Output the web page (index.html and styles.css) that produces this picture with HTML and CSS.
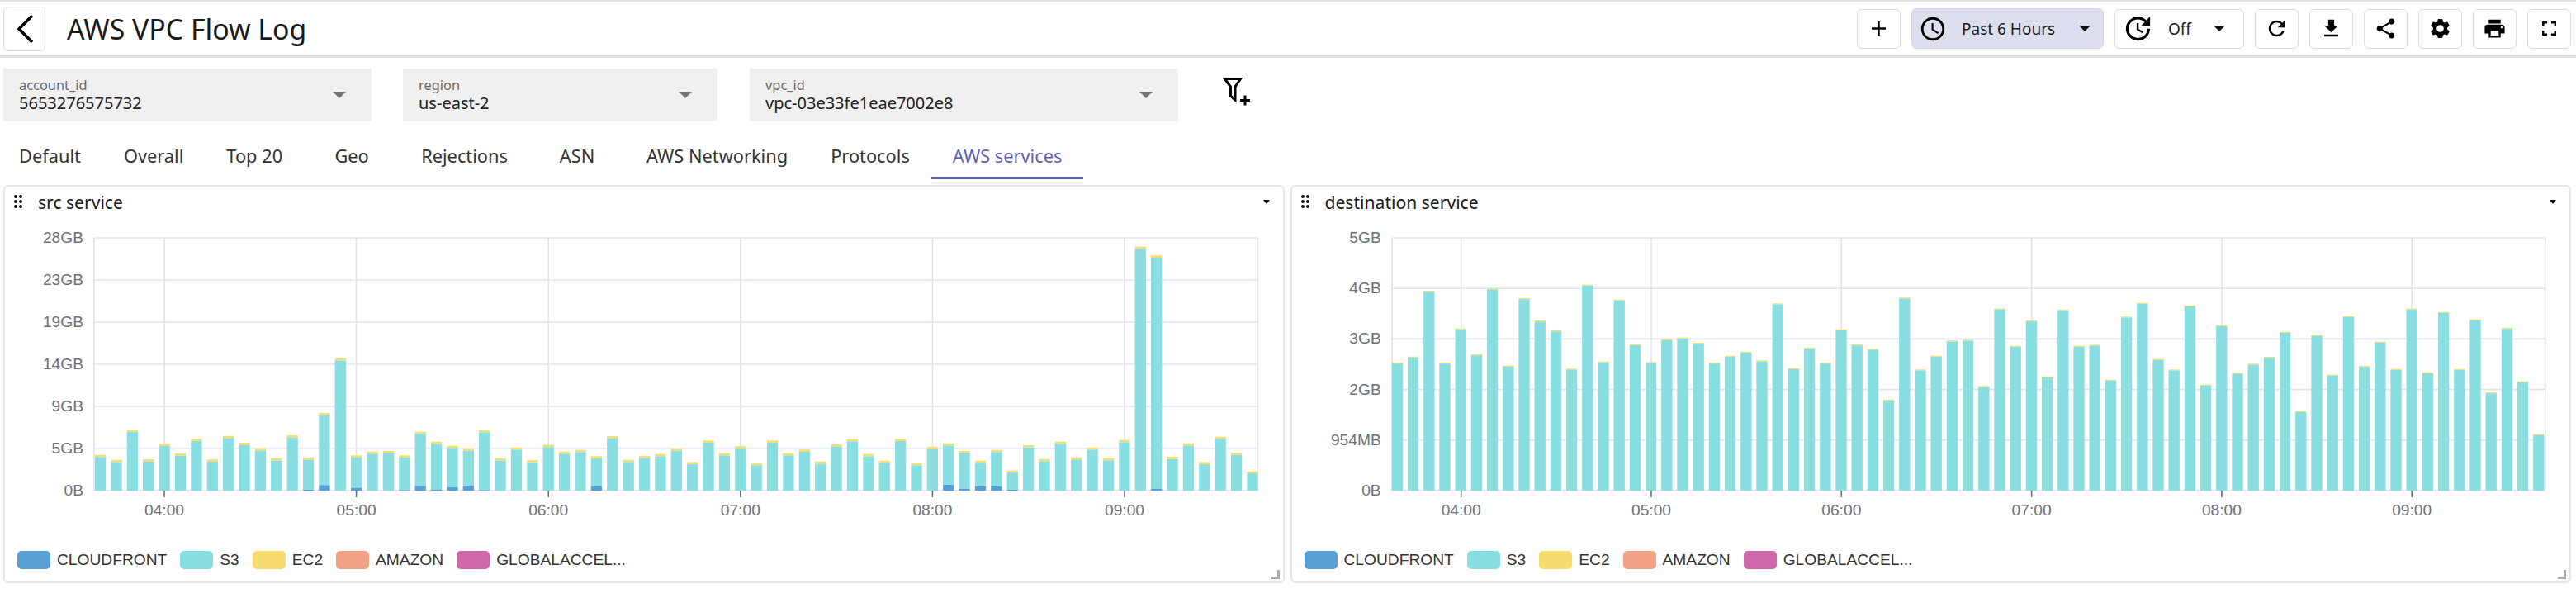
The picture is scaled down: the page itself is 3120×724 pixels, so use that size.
FILE: index.html
```html
<!DOCTYPE html>
<html lang="en">
<head>
  <meta charset="UTF-8" />
  <title>AWS VPC Flow Log</title>
  <link rel="stylesheet" href="styles.css">
</head>
<body>

  <header class="topbar">
    <button class="btn back-btn">
      <svg width="34" height="40" viewBox="0 0 34 40"><path d="M26 4 L10 20 L26 36" fill="none" stroke="#000" stroke-width="3.6"/></svg>
    </button>
    <h1 class="page-title">AWS VPC Flow Log</h1>

    <div class="toolbar">
      <button class="btn icon-btn">
        <svg class="icon" viewBox="0 0 24 24"><path d="M19 13h-6v6h-2v-6H5v-2h6V5h2v6h6v2z"/></svg>
      </button>
      <button class="btn range-btn">
        <svg class="icon-lg" viewBox="0 0 24 24"><path d="M11.99 2C6.47 2 2 6.48 2 12s4.47 10 9.99 10C17.52 22 22 17.52 22 12S17.52 2 11.99 2zM12 20c-4.42 0-8-3.58-8-8s3.58-8 8-8 8 3.58 8 8-3.58 8-8 8zm.5-13H11v6l5.25 3.15.75-1.23-4.5-2.67z"/></svg>
        <span class="btn-label">Past 6 Hours</span>
        <span class="caret"></span>
      </button>
      <button class="btn auto-btn">
        <svg class="icon-xl" viewBox="0 0 24 24"><path d="M21 10.12h-6.78l2.74-2.82c-2.73-2.7-7.15-2.8-9.88-.1-2.73 2.71-2.73 7.08 0 9.79s7.15 2.71 9.88 0C18.32 15.65 19 14.08 19 12.1h2c0 1.98-.88 4.55-2.64 6.29-3.51 3.48-9.21 3.48-12.72 0-3.5-3.47-3.53-9.11-.02-12.58s9.14-3.47 12.65 0L21 3v7.12zM12.5 8v4.25l3.5 2.08-.72 1.21L11 13V8h1.5z"/></svg>
        <span class="btn-label">Off</span>
        <span class="caret"></span>
      </button>
      <button class="btn icon-btn">
        <svg class="icon" viewBox="0 0 24 24"><path d="M17.65 6.35C16.2 4.9 14.21 4 12 4c-4.42 0-7.99 3.58-7.99 8s3.57 8 7.99 8c3.73 0 6.84-2.55 7.73-6h-2.08c-.82 2.33-3.04 4-5.65 4-3.31 0-6-2.69-6-6s2.69-6 6-6c1.66 0 3.14.69 4.22 1.78L13 11h7V4l-2.35 2.35z"/></svg>
      </button>
      <button class="btn icon-btn">
        <svg class="icon" viewBox="0 0 24 24"><path d="M19 9h-4V3H9v6H5l7 7 7-7zM5 18v2h14v-2H5z"/></svg>
      </button>
      <button class="btn icon-btn">
        <svg class="icon" viewBox="0 0 24 24"><path d="M18 16.08c-.76 0-1.44.3-1.96.77L8.91 12.7c.05-.23.09-.46.09-.7s-.04-.47-.09-.7l7.05-4.11c.54.5 1.25.81 2.04.81 1.66 0 3-1.34 3-3s-1.34-3-3-3-3 1.34-3 3c0 .24.04.47.09.7L8.04 9.81C7.5 9.31 6.79 9 6 9c-1.66 0-3 1.34-3 3s1.34 3 3 3c.79 0 1.5-.31 2.04-.81l7.12 4.16c-.05.21-.08.43-.08.65 0 1.61 1.31 2.92 2.92 2.92 1.61 0 2.92-1.31 2.92-2.92s-1.31-2.92-2.92-2.92z"/></svg>
      </button>
      <button class="btn icon-btn">
        <svg class="icon" viewBox="0 0 24 24"><path d="M19.14 12.94c.04-.3.06-.61.06-.94 0-.32-.02-.64-.07-.94l2.03-1.58c.18-.14.23-.41.12-.61l-1.92-3.32c-.12-.22-.37-.29-.59-.22l-2.39.96c-.5-.38-1.03-.7-1.62-.94l-.36-2.54c-.04-.24-.24-.41-.48-.41h-3.84c-.24 0-.43.17-.47.41l-.36 2.54c-.59.24-1.13.57-1.62.94l-2.39-.96c-.22-.08-.47 0-.59.22L2.74 8.87c-.12.21-.08.47.12.61l2.03 1.58c-.05.3-.09.63-.09.94s.02.64.07.94l-2.03 1.58c-.18.14-.23.41-.12.61l1.92 3.32c.12.22.37.29.59.22l2.39-.96c.5.38 1.03.7 1.62.94l.36 2.54c.05.24.24.41.48.41h3.84c.24 0 .44-.17.47-.41l.36-2.54c.59-.24 1.13-.56 1.62-.94l2.39.96c.22.08.47 0 .59-.22l1.92-3.32c.12-.22.07-.47-.12-.61l-2.01-1.58zM12 15.6c-1.98 0-3.6-1.62-3.6-3.6s1.62-3.6 3.6-3.6 3.6 1.62 3.6 3.6-1.62 3.6-3.6 3.6z"/></svg>
      </button>
      <button class="btn icon-btn">
        <svg class="icon" viewBox="0 0 24 24"><path d="M19 8H5c-1.66 0-3 1.34-3 3v6h4v4h12v-4h4v-6c0-1.66-1.34-3-3-3zm-3 11H8v-5h8v5zm3-7c-.55 0-1-.45-1-1s.45-1 1-1 1 .45 1 1-.45 1-1 1zm-1-9H6v4h12V3z"/></svg>
      </button>
      <button class="btn icon-btn">
        <svg class="icon" viewBox="0 0 24 24"><path d="M7 14H5v5h5v-2H7v-3zm-2-4h2V7h3V5H5v5zm12 7h-3v2h5v-5h-2v3zM14 5v2h3v3h2V5h-5z"/></svg>
      </button>
    </div>
  </header>

  <!-- template variables -->
  <section class="filters">
    <div class="filter filter-account">
      <div class="filter-text">
        <div class="filter-label">account_id</div>
        <div class="filter-value">5653276575732</div>
      </div>
      <span class="filter-caret"></span>
    </div>
    <div class="filter filter-region">
      <div class="filter-text">
        <div class="filter-label">region</div>
        <div class="filter-value">us-east-2</div>
      </div>
      <span class="filter-caret"></span>
    </div>
    <div class="filter filter-vpc">
      <div class="filter-text">
        <div class="filter-label">vpc_id</div>
        <div class="filter-value">vpc-03e33fe1eae7002e8</div>
      </div>
      <span class="filter-caret"></span>
    </div>
    <svg class="filter-add" width="36" height="36" viewBox="0 0 36 36">
      <path d="M2.5 2.5 H21.5 L15 12 V28 L9.5 23 V12 Z" fill="none" stroke="#000" stroke-width="3"/>
      <path d="M21 28.5 H33 M27 22.5 V34.5" fill="none" stroke="#000" stroke-width="3"/>
    </svg>
  </section>

  <nav class="tabs">
    <a class="tab">Default</a>
    <a class="tab">Overall</a>
    <a class="tab">Top 20</a>
    <a class="tab">Geo</a>
    <a class="tab">Rejections</a>
    <a class="tab">ASN</a>
    <a class="tab">AWS Networking</a>
    <a class="tab">Protocols</a>
    <a class="tab active">AWS services</a>
  </nav>

  <main class="panels">
    <section class="panel">
      <div class="panel-head">
        <span class="grip"><i></i><i></i><i></i><i></i><i></i><i></i></span>
        <span class="panel-title">src service</span>
        <span class="panel-menu"></span>
      </div>
      <svg class="chart" id="srcChart"></svg>
      <div class="legend">
        <span class="legend-item"><i class="swatch c-cloudfront"></i>CLOUDFRONT</span>
        <span class="legend-item"><i class="swatch c-s3"></i>S3</span>
        <span class="legend-item"><i class="swatch c-ec2"></i>EC2</span>
        <span class="legend-item"><i class="swatch c-amazon"></i>AMAZON</span>
        <span class="legend-item"><i class="swatch c-global"></i>GLOBALACCEL...</span>
      </div>
      <span class="resize-handle"></span>
    </section>

    <section class="panel">
      <div class="panel-head">
        <span class="grip"><i></i><i></i><i></i><i></i><i></i><i></i></span>
        <span class="panel-title">destination service</span>
        <span class="panel-menu"></span>
      </div>
      <svg class="chart" id="dstChart"></svg>
      <div class="legend">
        <span class="legend-item"><i class="swatch c-cloudfront"></i>CLOUDFRONT</span>
        <span class="legend-item"><i class="swatch c-s3"></i>S3</span>
        <span class="legend-item"><i class="swatch c-ec2"></i>EC2</span>
        <span class="legend-item"><i class="swatch c-amazon"></i>AMAZON</span>
        <span class="legend-item"><i class="swatch c-global"></i>GLOBALACCEL...</span>
      </div>
      <span class="resize-handle"></span>
    </section>
  </main>

  <script src="script.js"></script>
</body>
</html>
```

FILE: styles.css
```css
body {
  margin: 0;
  font-family: "Noto Sans", sans-serif;
  background-color: #fff;
  color: #1f1f1f;
}

.topbar {
  display: flex;
  align-items: center;
  height: 65px;
  padding: 0 6px 0 4px;
  border-top: 2px solid #e2e2e2;
  border-bottom: 3px solid #e2e2e2;
}

.btn {
  display: flex;
  align-items: center;
  justify-content: center;
  height: 48px;
  padding: 0;
  background: #fff;
  border: 1.5px solid #dcdcdc;
  border-radius: 6px;
  font-family: inherit;
  color: #1a1a1a;
}

.back-btn {
  width: 51px;
  height: 54px;
}

.page-title {
  margin: 0 0 0 26px;
  font-size: 33.8px;
  font-weight: 400;
  color: #1a1a1a;
}

.toolbar {
  display: flex;
  align-items: center;
  gap: 13px;
  margin-left: auto;
}

.icon-btn {
  width: 53px;
}

.icon {
  width: 29px;
  height: 29px;
}

.icon-lg {
  width: 34px;
  height: 34px;
}

.icon-xl {
  width: 39px;
  height: 39px;
}

.range-btn {
  width: 233px;
  height: 49px;
  justify-content: flex-start;
  padding-left: 8px;
  background: #dddfee;
  border-color: #d5d7e6;
}

.range-btn .btn-label {
  margin-left: 18px;
}

.range-btn .caret {
  margin-left: 29px;
}

.auto-btn {
  width: 157px;
  justify-content: flex-start;
  padding-left: 8px;
}

.auto-btn .btn-label {
  margin-left: 17px;
}

.auto-btn .caret {
  margin-left: 27px;
}

.btn-label {
  font-size: 19px;
}

.caret {
  width: 0;
  height: 0;
  border-left: 7px solid transparent;
  border-right: 7px solid transparent;
  border-top: 7px solid #111;
}

/* dropdown row */
.filters {
  display: flex;
  align-items: flex-start;
  padding: 13px 0 0 4px;
}

.filter {
  display: flex;
  align-items: center;
  justify-content: space-between;
  box-sizing: border-box;
  height: 64px;
  padding: 0 31px 0 19px;
  background-color: #f0f0f0;
}

.filter-account {
  width: 446px;
}

.filter-region {
  width: 381px;
  margin-left: 38px;
}

.filter-vpc {
  width: 519px;
  margin-left: 39px;
}

.filter-label {
  font-size: 16.4px;
  line-height: 20px;
  color: #6b6b6b;
}

.filter-value {
  font-size: 20px;
  line-height: 24px;
  color: #222;
}

.filter-caret {
  width: 0;
  height: 0;
  border-left: 8px solid transparent;
  border-right: 8px solid transparent;
  border-top: 8px solid #757575;
}

.filter-add {
  margin: 10px 0 0 54px;
}

/* tabs */
.tabs {
  display: flex;
  height: 57px;
  margin: 13px 0 0 -3px;
}

.tab {
  box-sizing: border-box;
  min-width: 116px;
  height: 57px;
  padding: 14px 26px 0;
  font-size: 21.8px;
  line-height: 30px;
  text-align: center;
  color: #333;
}

.tab.active {
  color: #5c60b4;
  border-bottom: 3px solid #5c60b4;
}

/* panels */
.panels {
  display: grid;
  grid-template-columns: 1fr 1fr;
  gap: 7px;
  padding: 7px 6px 0 4px;
}

.panel {
  position: relative;
  min-width: 0;
  height: 482px;
  box-sizing: border-box;
  border: 2px solid #e6e6e6;
  border-radius: 6px;
}

.panel-head {
  display: flex;
  align-items: center;
  box-sizing: border-box;
  height: 38px;
  padding: 0 16px 2px 11px;
}

.grip {
  display: grid;
  grid-template-columns: 4px 4px;
  gap: 2px;
  width: 10px;
}

.grip i {
  width: 4px;
  height: 4px;
  background: #111;
  border-radius: 50%;
}

.panel-title {
  margin-left: 19px;
  font-size: 21.1px;
  color: #1a1a1a;
}

.panel-menu {
  width: 0;
  height: 0;
  margin-left: auto;
  border-left: 4.5px solid transparent;
  border-right: 4.5px solid transparent;
  border-top: 5px solid #111;
}

.chart {
  display: block;
  width: 100%;
  height: 376px;
}

.chart text {
  font-family: "Liberation Sans", sans-serif;
  font-size: 19.2px;
  fill: #6e7079;
}

.legend {
  display: flex;
  gap: 16px;
  margin-top: 27px;
  padding-left: 15px;
}

.legend-item {
  display: flex;
  align-items: center;
  gap: 8px;
  height: 22px;
  font-family: "Liberation Sans", sans-serif;
  font-size: 19.2px;
  color: #333;
  white-space: nowrap;
}

.swatch {
  width: 40px;
  height: 22px;
  border-radius: 5px;
}

.c-cloudfront { background: #589fd6; }
.c-s3 { background: #89dee2; }
.c-ec2 { background: #f8dc70; }
.c-amazon { background: #f2a386; }
.c-global { background: #d067aa; }

.resize-handle {
  position: absolute;
  right: 4px;
  bottom: 3px;
  width: 7px;
  height: 8px;
  border-right: 3px solid #aaa;
  border-bottom: 3px solid #aaa;
}
```

FILE: script.js
```js
const COLORS = { cloudfront: "#589fd6", s3: "#89dee2", ec2: "#f8dc70" };
const GRID = "#e0e3f1";
const AXIS = "#6e7079";
const PLOT_TOP = 24;
const PLOT_BOTTOM = 330;

// bar heights are in px above the baseline, five minute buckets
const charts = [
  {
    id: "srcChart",
    left: 108, right: 1517.5,
    firstBar: 115.6, pitch: 19.38, barWidth: 13.3, capHeight: 2.7,
    firstTick: 193, tickStep: 232.6, labelX: 95,
    yLabels: ["0B", "5GB", "9GB", "14GB", "19GB", "23GB", "28GB"],
    heights: [43.3, 37.3, 74, 38, 56.7, 45, 63, 37.7, 66.3, 58, 51.3, 39, 67, 40.3, 94, 160.3, 42.7, 47.3, 48, 42.7,
      71.3, 59.3, 54.3, 51, 73.3, 39, 52.3, 37, 55.3, 47.3, 49.3, 41.7, 66, 37.3, 42.3, 44.3, 51, 34.7, 60.7, 45.3,
      53.7, 33.3, 60.7, 45.3, 49.7, 35.3, 56, 62.3, 44.3, 36.3, 62.7, 33.3, 53, 57.3, 48, 36.3, 49.3, 24.3, 55, 38.3,
      59.3, 40.3, 52.3, 39.3, 61.3, 295.3, 284.7, 41, 57.3, 34.7, 65.3, 46, 23.3],
    blue: { 13: 1, 14: 6.7, 16: 3.3, 19: 0.7, 20: 5.7, 21: 1.3, 22: 4, 23: 6, 24: 0.7, 31: 5, 53: 7, 54: 2.3, 55: 5, 56: 5, 57: 1, 66: 2.3 }
  },
  {
    id: "dstChart",
    left: 121, right: 1517.7,
    firstBar: 127.4, pitch: 19.2, barWidth: 13.3, capHeight: 1.2,
    firstTick: 204.7, tickStep: 230.3, labelX: 107.7,
    yLabels: ["0B", "954MB", "2GB", "3GB", "4GB", "5GB"],
    heights: [155, 162.3, 242, 155, 196.3, 165, 244.7, 151.3, 233, 206, 194, 147.7, 249.3, 156.3, 231.3, 177.3, 155.7, 183.3, 185.3, 179,
      155, 163.3, 168.3, 157.7, 226.7, 148.3, 173, 155, 195.3, 177, 171.7, 110.3, 233.7, 146.7, 163.3, 181.7, 182.7, 126.7, 220.3, 175.3,
      206, 138.3, 219.3, 175.3, 176.7, 134.3, 210.7, 227.3, 159.3, 146.7, 224.3, 128.3, 200.3, 142.7, 153.7, 162, 192.3, 96.3, 188.3, 140.3,
      211.3, 151, 180.3, 147.3, 220.3, 143.3, 216.3, 147.3, 207.3, 119, 197, 132.3, 68.3],
    blue: {}
  }
];

const TIMES = ["04:00", "05:00", "06:00", "07:00", "08:00", "09:00"];

function add(svg, tag, attrs, text) {
  const el = document.createElementNS("http://www.w3.org/2000/svg", tag);
  for (const key in attrs) el.setAttribute(key, attrs[key]);
  if (text) el.textContent = text;
  svg.appendChild(el);
}

function line(svg, x1, y1, x2, y2, color) {
  add(svg, "line", { x1, y1, x2, y2, stroke: color, "stroke-width": 1.6 });
}

function drawChart(c) {
  const svg = document.getElementById(c.id);
  const rowH = (PLOT_BOTTOM - PLOT_TOP) / (c.yLabels.length - 1);

  c.yLabels.forEach((label, i) => {
    const y = PLOT_BOTTOM - i * rowH;
    line(svg, c.left, y, c.right, y, GRID);
    add(svg, "text", { x: c.labelX, y: y + 6, "text-anchor": "end" }, label);
  });

  line(svg, c.left, PLOT_TOP, c.left, PLOT_BOTTOM, GRID);
  line(svg, c.right, PLOT_TOP, c.right, PLOT_BOTTOM, GRID);

  TIMES.forEach((label, i) => {
    const x = c.firstTick + i * c.tickStep;
    line(svg, x, PLOT_TOP, x, PLOT_BOTTOM, GRID);
    line(svg, x, PLOT_BOTTOM, x, PLOT_BOTTOM + 8, AXIS);
    add(svg, "text", { x, y: PLOT_BOTTOM + 30, "text-anchor": "middle" }, label);
  });

  c.heights.forEach((h, i) => {
    const x = c.firstBar + i * c.pitch - c.barWidth / 2;
    const blue = c.blue[i] || 0;
    const cap = Math.min(c.capHeight, h * 0.1);
    add(svg, "rect", { x, y: PLOT_BOTTOM - h, width: c.barWidth, height: cap, fill: COLORS.ec2 });
    add(svg, "rect", { x, y: PLOT_BOTTOM - h + cap, width: c.barWidth, height: h - cap - blue, fill: COLORS.s3 });
    if (blue) add(svg, "rect", { x, y: PLOT_BOTTOM - blue, width: c.barWidth, height: blue, fill: COLORS.cloudfront });
  });
}

charts.forEach(drawChart);
```
